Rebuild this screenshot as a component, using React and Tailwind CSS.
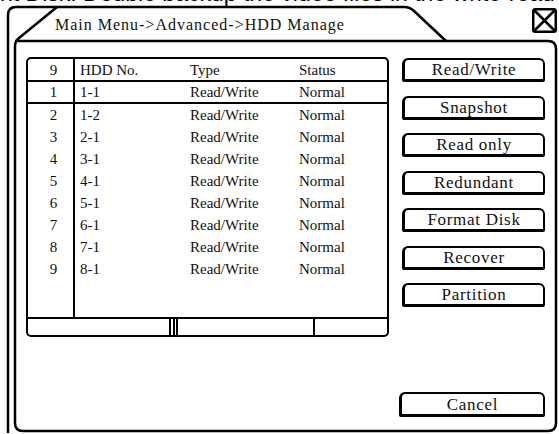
export default function App() {
  const rows = [
    ["2", "1-2"],
    ["3", "2-1"],
    ["4", "3-1"],
    ["5", "4-1"],
    ["6", "5-1"],
    ["7", "6-1"],
    ["8", "7-1"],
    ["9", "8-1"],
  ];
  const buttons = ["Read/Write", "Snapshot", "Read only", "Redundant", "Format Disk", "Recover", "Partition"];
  const serif = "font-['Liberation_Serif','Times_New_Roman',serif]";

  const Btn = ({ label }) => (
    <div className="h-[24px] w-[143px] border-2 border-l-[3px] border-b-[3px] border-black rounded-t-[6px] rounded-b-[2px] flex items-center justify-center text-[17px] leading-[17px] tracking-[0.7px] text-[#111]">
      {label}
    </div>
  );

  return (
    <div className={`relative w-[559px] h-[434px] bg-white overflow-hidden flex flex-col ${serif}`}>
      <svg className="absolute inset-0 pointer-events-none" width="559" height="434" viewBox="0 0 559 434" fill="none" stroke="#000" strokeWidth="2.5" strokeLinejoin="round">
        <path d="M8,433 L8,15 Q8,7 16,7 L404,7 Q410,7 414,11 L446,41" />
        <path d="M57,7 L19,38 Q15,41 15,46 L15,423 Q15,431 23,431 L548,431 Q556,431 556,423 L556,49 Q556,41 548,41 L15,41" />
      </svg>

      <div className="relative h-0">
        <div className="-mt-[18px] whitespace-nowrap text-[23px] leading-[23px] font-['Liberation_Sans',Arial,sans-serif] text-black">
          nt Disk. Double backup the video files in the write-read
        </div>
      </div>

      <div className="flex h-[41px] items-start">
        <div className="flex-1 pl-[55px] pt-[17px] text-[16px] leading-[16px] tracking-[1px] text-[#111]">
          Main Menu-&gt;Advanced-&gt;HDD Manage
        </div>
        <div className="mt-[8px] mr-[2px]">
          <svg width="25" height="25" viewBox="0 0 25 25" fill="none" stroke="#000" strokeWidth="2.5">
            <rect x="1.25" y="1.25" width="22.5" height="22.5" rx="2" />
            <path d="M2.5,2.5 L22.5,22.5 M22.5,2.5 L2.5,22.5" />
          </svg>
        </div>
      </div>

      <div className="flex-1 flex flex-col pl-[26px] pr-[14px] pt-[16px] pb-[17px]">
        <div className="flex flex-row items-start gap-[13px]">
          <div className="w-[363px] h-[280px] border-2 border-black rounded-[5px] flex flex-col overflow-hidden text-[15px] leading-[15px] text-[#111]">
            <div className="flex h-[23px] border-b-2 border-black">
              <div className="w-[47px] border-r-2 border-black flex items-center justify-center pl-[6px] pt-[2px]">9</div>
              <div className="w-[115px] pl-[5px] pt-[2px] flex items-center">HDD No.</div>
              <div className="w-[109px] pt-[2px] flex items-center">Type</div>
              <div className="pt-[2px] flex items-center">Status</div>
            </div>
            <div className="flex h-[22px] border-b-2 border-black">
              <div className="w-[47px] border-r-2 border-black flex items-center justify-center pl-[6px]">1</div>
              <div className="w-[115px] pl-[5px] flex items-center">1-1</div>
              <div className="w-[109px] flex items-center">Read/Write</div>
              <div className="flex items-center">Normal</div>
            </div>
            {rows.map(([i, n]) => (
              <div key={i} className="flex h-[22px]">
                <div className="w-[47px] border-r-2 border-black flex items-center justify-center pl-[6px]">{i}</div>
                <div className="w-[115px] pl-[5px] flex items-center">{n}</div>
                <div className="w-[109px] flex items-center">Read/Write</div>
                <div className="flex items-center">Normal</div>
              </div>
            ))}
            <div className="flex-1 flex">
              <div className="w-[47px] border-r-2 border-black" />
            </div>
            <div className="h-[18px] border-t-2 border-black flex">
              <div className="w-[141px]" />
              <div className="w-[2px] h-full bg-black" />
              <div className="w-[2px] h-full bg-black ml-[1.5px]" />
              <div className="w-[2px] h-full bg-black ml-[1.5px]" />
              <div className="w-[135px]" />
              <div className="w-[2px] h-full bg-black" />
            </div>
          </div>

          <div className="flex flex-col gap-[13.5px] pt-[1px]">
            {buttons.map((b) => (
              <Btn key={b} label={b} />
            ))}
          </div>
        </div>
        <div className="mt-auto self-end">
          <div className="h-[25px] w-[146px] border-2 border-l-[3px] border-b-[3px] border-black rounded-t-[6px] rounded-b-[2px] flex items-center justify-center text-[17px] leading-[17px] tracking-[0.7px] text-[#111]">
            Cancel
          </div>
        </div>
      </div>
    </div>
  );
}
